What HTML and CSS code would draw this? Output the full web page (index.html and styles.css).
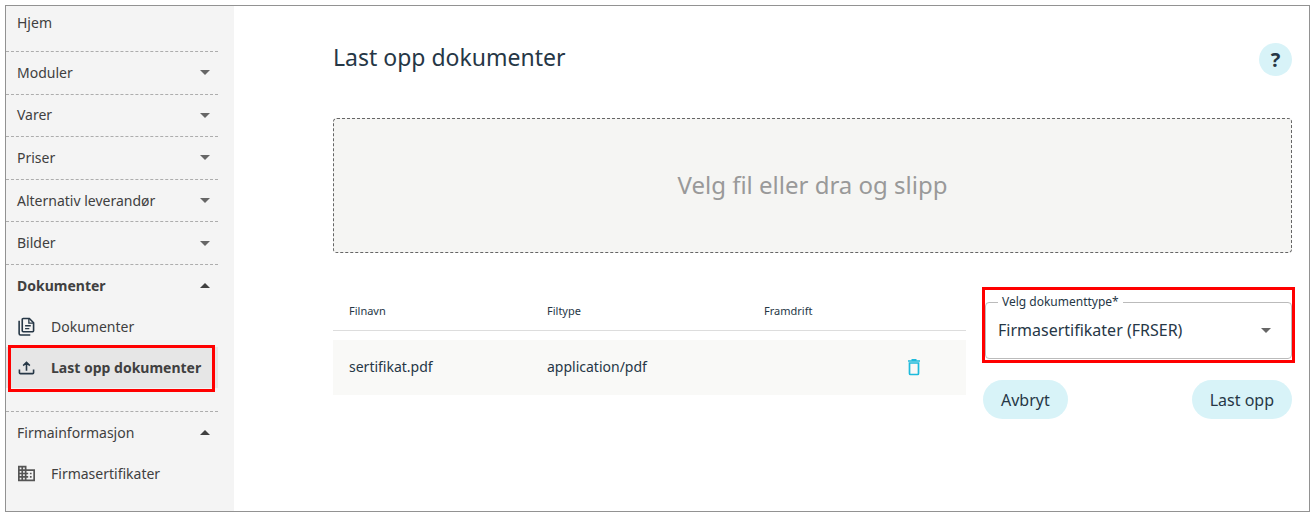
FILE: index.html
```html
<!DOCTYPE html>
<html lang="no">
<head>
<meta charset="utf-8">
<meta name="viewport" content="width=device-width, initial-scale=1">
<title>Last opp dokumenter</title>
<link rel="stylesheet" href="styles.css">
</head>
<body>
<div class="app">
  <nav class="sidebar">
    <a class="home" href="#">Hjem</a>
    <div class="groups">
      <button class="group" type="button">Moduler <span class="caret"></span></button>
      <button class="group" type="button">Varer <span class="caret"></span></button>
      <button class="group" type="button">Priser <span class="caret"></span></button>
      <button class="group" type="button">Alternativ leverandør <span class="caret"></span></button>
      <button class="group" type="button">Bilder <span class="caret"></span></button>
    </div>
    <section class="section section-open">
      <button class="group group-current" type="button">Dokumenter <span class="caret caret-up"></span></button>
      <a class="item" href="#">
        <svg class="icon" viewBox="0 0 18 20" fill="none" stroke="#263746" stroke-width="1.700"><path d="M5.500 1.500h6.500l4.500 4.500v8.500q0 1-1 1h-10q-1 0-1-1v-12q0-1 1-1zM1.200 4v13.500q0 1.500 1.500 1.500H13"/><path d="M11.500 2v4.500H16M7.500 9.200h6M7.500 12.200h4.500" stroke-width="1.400"/></svg>
        Dokumenter
      </a>
      <a class="item item-active" href="#">
        <svg class="icon" viewBox="0 0 18 20" fill="none" stroke="#263746" stroke-width="1.700"><path d="M1.500 12v3.500q0 1 1 1h13q1 0 1-1V12M9 13.500V4.500M5.500 8L9 4.500 12.500 8"/></svg>
        Last opp dokumenter
      </a>
    </section>
    <section class="section">
      <button class="group" type="button">Firmainformasjon <span class="caret caret-up"></span></button>
      <a class="item" href="#">
        <svg class="icon" viewBox="2 2 20 20" fill="#555"><path d="M12 7V3H2v18h20V7H12zM6 19H4v-2h2v2zm0-4H4v-2h2v2zm0-4H4V9h2v2zm0-4H4V5h2v2zm4 12H8v-2h2v2zm0-4H8v-2h2v2zm0-4H8V9h2v2zm0-4H8V5h2v2zm10 12h-8v-2h2v-2h-2v-2h2v-2h-2V9h8v10zm-2-8h-2v2h2v-2zm0 4h-2v2h2v-2z"/></svg>
        Firmasertifikater
      </a>
    </section>
  </nav>
  <main class="main">
    <header class="header">
      <h1 class="title">Last opp dokumenter</h1>
      <button class="help" type="button" aria-label="Hjelp">?</button>
    </header>
    <button class="dropzone" type="button">Velg fil eller dra og slipp</button>
    <div class="content">
      <table class="files">
        <thead>
          <tr><th class="col-name">Filnavn</th><th class="col-type">Filtype</th><th class="col-progress">Framdrift</th><th class="col-action"></th></tr>
        </thead>
        <tbody>
          <tr><td>sertifikat.pdf</td><td>application/pdf</td><td></td>
            <td><button class="delete" type="button" aria-label="Slett"><svg class="trash" viewBox="0 0 14 18" fill="none" stroke="#1fbbdc" stroke-width="1.700"><path d="M2.500 5v10.500q0 1 1 1h7q1 0 1-1V5zM1 3h12M4.500 1.900h5"/></svg></button></td></tr>
        </tbody>
      </table>
      <form class="form">
        <div class="marked">
          <fieldset class="field">
            <legend class="legend"><label for="doctype">Velg dokumenttype*</label></legend>
            <select class="select" id="doctype"><option>Firmasertifikater (FRSER)</option></select>
            <span class="caret"></span>
          </fieldset>
        </div>
        <div class="actions">
          <button class="pill" type="button">Avbryt</button>
          <button class="pill" type="button">Last opp</button>
        </div>
      </form>
    </div>
  </main>
</div>
</body>
</html>
```
FILE: styles.css
```css
* { box-sizing: border-box; }

body {
  margin: 0;
  padding: 5px 6px 5px 5px;
  background: #fff;
  color: #263746;
  font: 14px/20px "Noto Sans", sans-serif;
}

button, select { font: inherit; color: inherit; cursor: pointer; }

.app {
  display: flex;
  min-height: calc(100vh - 10px);
  border: 1px solid #929292;
}

/* Sidebar */
.sidebar {
  flex: 0 0 228px;
  padding-right: 16px;
  background: #f4f4f4;
  color: #404040;
}

.home {
  display: block;
  padding: 7px 11px 18px;
  border-bottom: 1px dashed #adadad;
  color: inherit;
  text-decoration: none;
}

.groups {
  display: grid;
  grid-auto-rows: 1fr;
  min-height: 213px;
}

.group {
  display: flex;
  align-items: center;
  justify-content: space-between;
  width: 100%;
  padding: 0 8px 0 11px;
  border: 0;
  background: none;
  text-align: left;
}

.groups .group { border-bottom: 1px dashed #adadad; }
.section .group { height: 41px; }
.section-open { padding-bottom: 23px; border-bottom: 1px dashed #adadad; }
.group-current { font-weight: 700; }

.caret {
  border: 5px solid transparent;
  border-top-color: #666;
  border-bottom-width: 0;
}

.caret-up {
  border-width: 0 5px 5px;
  border-bottom-color: #404040;
}

.item {
  display: flex;
  align-items: center;
  gap: 16px;
  height: 41px;
  padding-left: 12px;
  color: inherit;
  text-decoration: none;
  white-space: nowrap;
}

.icon { flex: none; width: 17px; height: 19px; }

.item-active {
  position: relative;
  background: #e6e6e6;
  font-weight: 700;
}

.item-active::after {
  content: "";
  position: absolute;
  inset: -2px 3px -4px 2px;
  border: 3px solid #f00;
}

/* Main area */
.main {
  flex: 1;
  min-width: 0;
  padding: 35px 17px 35px 99px;
}

.header {
  display: flex;
  align-items: flex-start;
  justify-content: space-between;
  padding-bottom: 42px;
}

.title { margin: 0; font-size: 23px; line-height: 32px; font-weight: 400; }

.help {
  width: 33px;
  height: 33px;
  margin-top: 2px;
  padding: 0;
  border: 0;
  border-radius: 50%;
  background: #d8f3f8;
  font-size: 20px;
  font-weight: 700;
}

.dropzone {
  display: block;
  width: 100%;
  padding: 49px 16px 51px;
  border: 1px dashed #666;
  border-radius: 4px;
  background: #f5f5f3;
  color: #999;
  font-size: 24px;
  line-height: 33px;
}

.content {
  display: flex;
  align-items: flex-start;
  gap: 16px;
  padding-top: 34px;
}

.files {
  flex: 1;
  min-width: 0;
  table-layout: fixed;
  border-collapse: collapse;
  text-align: left;
}

.files th {
  height: 43px;
  padding: 6px 16px 0;
  border-bottom: 1px solid #ddd;
  font-size: 11px;
  font-weight: 400;
}

.files tbody::before { content: ""; display: block; height: 9px; }
.files tbody tr { background: #f9f9f7; }
.files td { height: 55px; padding: 0 16px; }
.col-name { width: 198px; }
.col-type { width: 217px; }
.col-progress { width: 20%; }

.delete {
  display: flex;
  margin-left: 16px;
  padding: 0;
  border: 0;
  background: none;
}

.trash { width: 14px; height: 18px; }

.form { flex: 0 0 313px; margin-right: -3px; }

.marked { padding: 4px 0 1px; border: 3px solid #f00; }

.field {
  display: flex;
  position: relative;
  align-items: center;
  min-width: 0;
  margin: 0;
  padding: 0 20px 0 12px;
  border: 1px solid #bbb;
  border-radius: 4px;
}

.legend { padding: 0 4px; font-size: 12px; line-height: 16px; }

.select {
  flex: 1;
  min-width: 0;
  height: 40px;
  margin-bottom: 8px;
  padding: 0;
  border: 0;
  background: none;
  appearance: none;
  font-size: 16px;
}

.field .caret { margin-bottom: 8px; }

.actions {
  display: flex;
  justify-content: space-between;
  padding: 17px 3px 0 1px;
}

.pill {
  height: 39px;
  padding: 0 18px;
  border: 0;
  border-radius: 20px;
  background: #d8f3f8;
  font-size: 16px;
}
```
